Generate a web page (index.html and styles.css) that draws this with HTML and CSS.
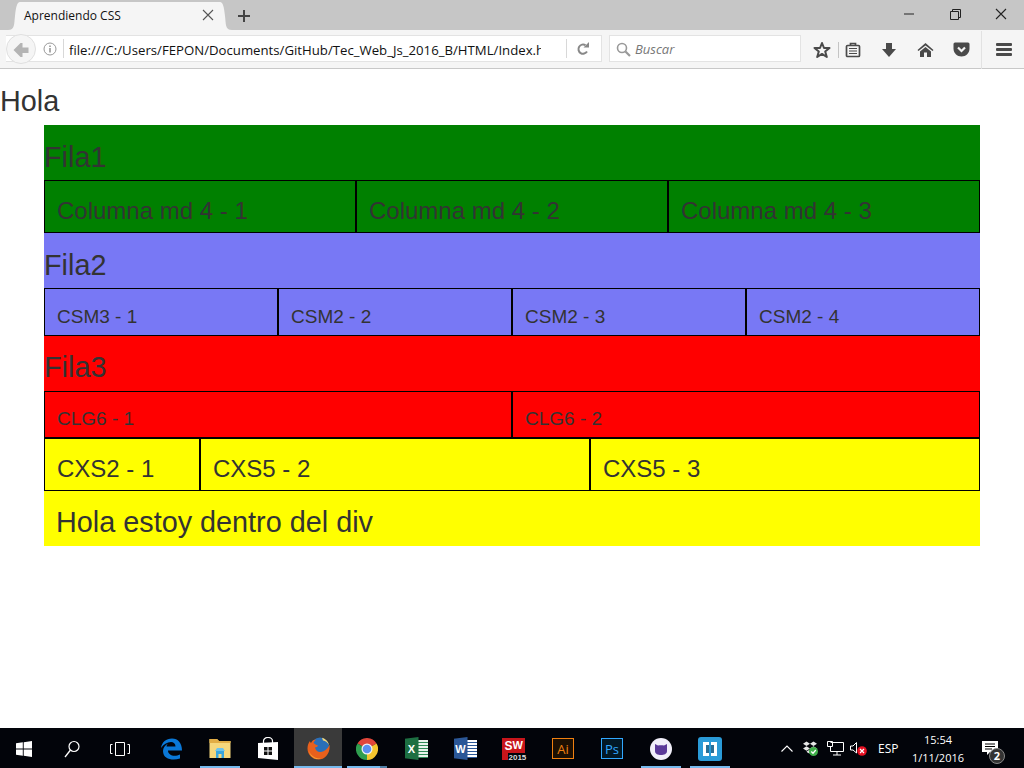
FILE: index.html
```html
<!DOCTYPE html>
<html lang="es">
<head>
  <meta charset="UTF-8">
  <title>Aprendiendo CSS</title>
  <link rel="stylesheet" href="styles.css">
</head>
<body>
  <div class="tabbar">
    <div class="tab">
      <svg class="flare" width="12" height="28" viewBox="0 0 12 28"><path d="M0 28C7 28 6 22 7 14C8 5 9 0 12 0V28Z" fill="#f5f5f5"/></svg>
      <div class="tab-body">
        <span class="tab-title">Aprendiendo CSS</span>
        <svg class="tab-close" width="12" height="12" viewBox="0 0 12 12"><path d="M1 1L11 11M11 1L1 11" stroke="#555" stroke-width="1.1" fill="none"/></svg>
      </div>
      <svg class="flare" width="12" height="28" viewBox="0 0 12 28"><path d="M12 28C5 28 6 22 5 14C4 5 3 0 0 0V28Z" fill="#f5f5f5"/></svg>
    </div>
    <svg class="new-tab" width="14" height="14" viewBox="0 0 14 14"><path d="M7 1V13M1 7H13" stroke="#444" stroke-width="2" fill="none"/></svg>
    <div class="win-buttons">
      <svg width="46" height="30" viewBox="0 0 46 30"><path d="M18 14H28" stroke="#222" fill="none"/></svg>
      <svg width="46" height="30" viewBox="0 0 46 30"><path d="M18.5 11.5H26.5V19.5H18.5ZM20.5 11.5V9.5H28.5V17.5H26.5" stroke="#222" fill="none"/></svg>
      <svg width="46" height="30" viewBox="0 0 46 30"><path d="M18 9L28 19M28 9L18 19" stroke="#222" stroke-width="1.1" fill="none"/></svg>
    </div>
  </div>

  <div class="toolbar">
    <div class="urlbar">
      <div class="back">
        <svg width="16" height="14" viewBox="0 0 16 14"><path d="M7.5 0L0.5 7L7.5 14L9.5 14L9.5 10L15.5 10V4.500L9.500 4.500L9.500 0Z" fill="#b4b4b4"/></svg>
      </div>
      <svg class="info" width="14" height="14" viewBox="0 0 14 14"><circle cx="7" cy="7" r="6" fill="none" stroke="#999"/><path d="M7 6V10.500M7 3.500V5" stroke="#888" stroke-width="1.400" fill="none"/></svg>
      <span class="sep"></span>
      <span class="url">file:///C:/Users/FEPON/Documents/GitHub/Tec_Web_Js_2016_B/HTML/Index.html</span>
      <span class="sep sep-reload"></span>
      <svg class="reload" width="14" height="14" viewBox="0 0 14 14"><path d="M11 9.500A4.600 4.600 0 1 1 9.500 3.200" fill="none" stroke="#888" stroke-width="2"/><path d="M7.500 5.500H13V0Z" fill="#888"/></svg>
    </div>
    <div class="searchbar">
      <svg width="15" height="15" viewBox="0 0 15 15"><circle cx="6" cy="6" r="4.500" fill="none" stroke="#999" stroke-width="1.600"/><path d="M9.500 9.500L14 14" stroke="#999" stroke-width="2.200"/></svg>
      <span class="search-text">Buscar</span>
    </div>
    <div class="tools">
      <svg class="tool-star" width="18" height="18" viewBox="0 0 18 18"><path d="M9 2L11 7H16.500L12.200 10.500L13.800 16L9 12.900L4.200 16L5.800 10.500L1.500 7H7Z" fill="none" stroke="#4a4a4a" stroke-width="2" stroke-linejoin="round"/></svg>
      <span class="tool-sep"></span>
      <svg class="tool-list" width="16" height="16" viewBox="0 0 16 16"><path d="M2.500 3.500H13.500Q14.500 3.500 14.500 4.500V13.500Q14.500 14.500 13.500 14.500H2.500Q1.500 14.500 1.500 13.500V4.500Q1.500 3.500 2.500 3.500ZM5.500 3.500V1.500H10.500V3.500" fill="none" stroke="#4a4a4a" stroke-width="1.700"/><path d="M4 6.500H12M4 9H12M4 11.500H12" stroke="#4a4a4a" stroke-width="1.200"/></svg>
      <svg class="tool-down" width="16" height="16" viewBox="0 0 16 16"><path d="M5 1H11V7H15L8 15L1 7H5Z" fill="#4a4a4a"/></svg>
      <svg class="tool-home" width="17" height="16" viewBox="0 0 17 16"><path d="M8.500 1L0.500 8L1.500 9L8.500 3.500L15.500 9L16.500 8Z" fill="#4a4a4a"/><path d="M8.500 5L3 9.500V15H7V10.500H10V15H14V9.500Z" fill="#4a4a4a"/></svg>
      <svg class="tool-pocket" width="17" height="15" viewBox="0 0 17 15"><path d="M2 0.500H15Q16.500 0.500 16.500 2V6.500C16.500 11 13 14.500 8.500 14.500C4 14.500 0.500 11 0.500 6.500V2Q0.500 0.500 2 0.500Z" fill="#4a4a4a"/><path d="M5 5.500L8.500 9L12 5.500" fill="none" stroke="#f5f5f5" stroke-width="2.200"/></svg>
      <span class="tool-div"></span>
      <div class="menu-btn"><span></span><span></span><span></span></div>
    </div>
  </div>

  <div class="page">
    <p class="hola">Hola</p>
    <div class="container">
      <div class="verde">
        <p class="fila fila-1">Fila1</p>
        <div class="row">
          <div class="col col-4 txt-24">Columna md 4 - 1</div>
          <div class="col col-4 txt-24">Columna md 4 - 2</div>
          <div class="col col-4 txt-24">Columna md 4 - 3</div>
        </div>
      </div>
      <div class="azul">
        <p class="fila">Fila2</p>
        <div class="row">
          <div class="col col-3 txt-19">CSM3 - 1</div>
          <div class="col col-3 txt-19">CSM2 - 2</div>
          <div class="col col-3 txt-19">CSM2 - 3</div>
          <div class="col col-3 txt-19">CSM2 - 4</div>
        </div>
      </div>
      <div class="rojo">
        <p class="fila">Fila3</p>
        <div class="row">
          <div class="col col-6 txt-19">CLG6 - 1</div>
          <div class="col col-6 txt-19">CLG6 - 2</div>
        </div>
      </div>
      <div class="amarillo">
        <div class="row">
          <div class="col col-2 txt-24">CXS2 - 1</div>
          <div class="col col-5 txt-24">CXS5 - 2</div>
          <div class="col col-5 txt-24">CXS5 - 3</div>
        </div>
        <p class="dentro">Hola estoy dentro del div</p>
      </div>
    </div>
  </div>

  <div class="taskbar">
    <div class="task">
      <svg width="16" height="16" viewBox="0 0 16 16"><path d="M0 2.300L6.800 1.300V7.500H0ZM7.700 1.200L16 0V7.500H7.700ZM0 8.400H6.800V14.700L0 13.700ZM7.700 8.400H16V16L7.700 14.800Z" fill="#fff"/></svg>
    </div>
    <div class="task">
      <svg width="16" height="18" viewBox="0 0 16 18"><circle cx="10" cy="6.500" r="5" fill="none" stroke="#fff" stroke-width="1.200"/><path d="M6.500 10L1 17" stroke="#fff" stroke-width="1.300"/></svg>
    </div>
    <div class="task">
      <svg width="20" height="14" viewBox="0 0 20 14"><path d="M5.500 0.500H14.500V13.500H5.500ZM2.500 2.500H0.500V11.500H2.500M17.500 2.500H19.500V11.500H17.500" fill="none" stroke="#fff"/></svg>
    </div>
    <div class="task task-edge">
      <svg width="21" height="22" viewBox="0 0 21 22"><path d="M0 10C1 4 5 0.500 11 0.500C17 0.500 21 5 21 12.500H7C7 17 13 19.500 19 16.500V20.500C12 23 2 21.500 2 13C2 10 4 7 7 5.500C6 6.500 5.500 7.500 5.500 8.500H14.500C14.500 5.500 12.500 4 10 4C6 4 2.500 6.500 0 10Z" fill="#0a78d7"/></svg>
    </div>
    <div class="task task-on task-files">
      <svg width="22" height="21" viewBox="0 0 22 21"><path d="M0.500 1H8L10 3H21.500V20H0.500Z" fill="#f6d77c"/><path d="M0.500 1H8L10 3H21.500V5H0.500Z" fill="#e2ad45"/><path d="M7 12H15V20H12.500V16H9.500V20H7Z" fill="#39a5dd"/><path d="M6 13L8 10H14L16 13Z" fill="#6fc3ea"/></svg>
    </div>
    <div class="task">
      <svg width="22" height="24" viewBox="0 0 22 24"><path d="M6.500 6V4C6.500 2 8.500 0.500 11 0.500C13.500 0.500 15.500 2 15.500 4V6" fill="none" stroke="#fff" stroke-width="1.200"/><path d="M1 6L21 5V23L1 21Z" fill="#fff"/><path d="M7 10H10.500V13.500H7ZM11.500 10H15V13.500H11.500ZM7 14.500H10.500V18H7ZM11.500 14.500H15V18H11.500Z" fill="#111"/></svg>
    </div>
    <div class="task task-on task-now task-ff">
      <svg width="23" height="23" viewBox="0 0 23 23"><circle cx="13" cy="9.500" r="9" fill="#2a6fb8"/><path d="M15 0.800C19 1.800 22 5.500 22.500 10C22 6.500 19 4 16 3.500Z" fill="#f7d774"/><path d="M22.500 8C23.500 16 18 22.500 11.500 22.500C5 22.500 0.500 17.500 0.500 11.500C0.500 8.500 1.500 5.500 3 4C3 5 3.500 5.500 4 6C5 3.500 7 2.500 9 2.500C8 3.500 7 4.500 6.500 6C8 7 9 8 11 8.500C10.500 10 9 10 8 10.500C8.500 13.500 11 15.500 14 15C17.500 14.500 20.500 12 22.500 8Z" fill="#e8601c"/><path d="M2 14C4 19 9 22 14 21.500C9 23.500 3 20 2 14Z" fill="#f7a531"/></svg>
    </div>
    <div class="task task-on task-chrome">
      <svg width="22" height="22" viewBox="0 0 22 22"><path d="M11 11L1.470 5.500A11 11 0 0 1 20.530 5.500Z" fill="#e0453a"/><path d="M11 11L20.530 5.500A11 11 0 0 1 11 22Z" fill="#f5c52e"/><path d="M11 11L11 22A11 11 0 0 1 1.470 5.500Z" fill="#2f9e4f"/><circle cx="11" cy="11" r="5.500" fill="#f2f2f2"/><circle cx="11" cy="11" r="4.300" fill="#5a8ff0"/></svg>
    </div>
    <div class="task task-office">
      <div class="office office-excel"><span class="office-sheet"></span><span class="office-tile">X</span></div>
    </div>
    <div class="task task-office">
      <div class="office office-word"><span class="office-sheet"></span><span class="office-tile">W</span></div>
    </div>
    <div class="task">
      <div class="sw"><span class="sw-s">S</span><span class="sw-w">W</span><span class="sw-year">2015</span></div>
    </div>
    <div class="task task-ai">
      <span class="adobe adobe-ai">Ai</span>
    </div>
    <div class="task task-office">
      <span class="adobe adobe-ps">Ps</span>
    </div>
    <div class="task task-on task-office">
      <svg width="22" height="22" viewBox="0 0 22 22"><circle cx="11" cy="11" r="11" fill="#f1effa"/><path d="M5 6L8 7.500C10 7 12 7 14 7.500L17 6V13C17 16 14 17 11 17C8 17 5 16 5 13Z" fill="#5b3a99"/></svg>
    </div>
    <div class="task task-on task-office">
      <svg width="24" height="24" viewBox="0 0 24 24"><rect width="24" height="24" rx="3" fill="#2a9bd8"/><path d="M5 5H11V19H5ZM13 5H19V19H13Z" fill="#fff"/><path d="M8 8H11V16H8ZM13 8H16V16H13Z" fill="#2a6f96"/></svg>
    </div>

    <div class="tray">
      <svg class="tray-up" width="12" height="7" viewBox="0 0 12 7"><path d="M0.500 6.500L6 1L11.500 6.500" fill="none" stroke="#fff" stroke-width="1.100"/></svg>
      <svg class="tray-box" width="15" height="15" viewBox="0 0 15 15"><path d="M3.500 0.500L7 2.800L3.500 5L0 2.800ZM10.500 0.500L14 2.800L10.500 5L7 2.800ZM3.500 5.200L7 7.500L3.500 9.700L0 7.500ZM10.500 5.200L14 7.500L10.500 9.700L7 7.500ZM3.500 10.500L7 8.500L7 12.500L5 12Z" fill="#e6e6e6"/><circle cx="10.500" cy="10.500" r="4.500" fill="#3fae49"/><path d="M8.300 10.500L10 12.200L12.800 9" fill="none" stroke="#fff" stroke-width="1.300"/></svg>
      <svg class="tray-net" width="17" height="15" viewBox="0 0 17 15"><path d="M3.500 1.500H16.500V10.500H3.500V5.500M10 10.500V14M6 14H14M0.500 0.500H5.500V5.500H0.500Z" fill="none" stroke="#fff"/></svg>
      <svg class="tray-vol" width="17" height="15" viewBox="0 0 17 15"><path d="M0.500 5H3L6.500 1.500V12L3 9H0.500Z" fill="none" stroke="#fff"/><circle cx="12" cy="10" r="4.800" fill="#e81123"/><path d="M10 8L14 12M14 8L10 12" stroke="#fff" stroke-width="1.200"/></svg>
      <span class="tray-lang">ESP</span>
      <div class="clock"><span>15:54</span><span>1/11/2016</span></div>
      <div class="notif">
        <svg width="16" height="15" viewBox="0 0 16 15"><path d="M0 0H16V11H8L5 14V11H0Z" fill="#fff"/><path d="M3 3H13M3 5.500H13M3 8H10" stroke="#000"/></svg>
        <span class="notif-badge">2</span>
      </div>
    </div>
  </div>
</body>
</html>
```

FILE: styles.css
```css
* {
  box-sizing: border-box;
}
body {
  margin: 0;
  height: 768px;
  overflow: hidden;
  display: flex;
  flex-direction: column;
  font-family: "Liberation Sans", Arial, sans-serif;
  color: #333;
  background: #fff;
}
p {
  margin: 0;
}

/* browser chrome */
.tabbar {
  height: 30px;
  display: flex;
  align-items: flex-end;
  background: #c6c6c6;
}
.tab {
  display: flex;
  margin-left: 8px;
  height: 28px;
}
.flare {
  display: block;
}
.tab-body {
  width: 200px;
  display: flex;
  align-items: center;
  justify-content: space-between;
  background: #f5f5f5;
  padding: 0 6px 2px 4px;
}
.tab-title {
  font: 12px "Open Sans", sans-serif;
  color: #111;
}
.new-tab {
  margin: 0 0 7px 5px;
}
.win-buttons {
  margin-left: auto;
  align-self: flex-start;
  display: flex;
}
.toolbar {
  height: 39px;
  display: flex;
  align-items: center;
  background: #f5f5f5;
  border-bottom: 1px solid #c8c8c8;
  padding: 0 0 1px 6px;
}
.urlbar {
  width: 596px;
  height: 27px;
  display: flex;
  align-items: center;
  background: #fff;
  border: 1px solid #e3e3e3;
  border-left: 0;
}
.back {
  width: 30px;
  height: 30px;
  flex: none;
  display: flex;
  align-items: center;
  justify-content: center;
  padding-top: 2px;
  background: #f5f5f5;
  border: 1px solid #e0e0e0;
  border-radius: 50%;
}
.info {
  margin-left: 7px;
  margin-top: 1px;
}
.sep {
  width: 1px;
  height: 19px;
  background: #d8d8d8;
  margin: 0 5px 0 6px;
}
.url {
  width: 472px;
  flex: none;
  overflow: hidden;
  white-space: nowrap;
  padding-top: 2px;
  font: 13.200px "Open Sans", sans-serif;
  color: #111;
}
.sep-reload {
  margin: 0 9px 0 25px;
  flex: none;
}
.reload {
  flex: none;
}
.searchbar {
  width: 192px;
  height: 27px;
  margin-left: 7px;
  display: flex;
  align-items: center;
  gap: 4px;
  padding: 1px 0 0 6px;
  background: #fff;
  border: 1px solid #e3e3e3;
}
.search-text {
  font: italic 13px "Open Sans", sans-serif;
  color: #777;
}
.tools {
  display: flex;
  align-items: center;
  margin-left: 12px;
  padding-top: 2px;
  flex: 1;
}
.tool-sep {
  width: 1px;
  height: 16px;
  background: #c4c4c4;
  margin: 0 6px 0 7px;
}
.tool-down {
  margin-left: 20px;
}
.tool-home {
  margin-left: 20px;
}
.tool-pocket {
  margin-left: 19px;
}
.tool-div {
  width: 1px;
  height: 38px;
  background: #e2e2e2;
  margin: 0 14px 0 11px;
}
.menu-btn {
  width: 16px;
  display: flex;
  flex-direction: column;
  gap: 2px;
}
.menu-btn span {
  height: 3px;
  border-radius: 1px;
  background: #4a4a4a;
}

/* page content */
.page {
  flex: 1;
  padding-top: 12px;
}
.hola {
  font-size: 28.800px;
  line-height: 40px;
}
.container {
  width: 936px;
  margin-left: 44px;
  margin-top: 4px;
}
.verde {
  background: #008000;
}
.azul {
  background: #7878f5;
}
.rojo {
  background: #f00;
}
.amarillo {
  background: #ff0;
}
.fila {
  font-size: 28.800px;
  line-height: 40px;
  padding: 12px 0 3px;
}
.fila-1,
.rojo .fila {
  padding: 11px 0 4px;
}
.fila-1 {
  padding: 12px 0 3px;
}
.row {
  display: flex;
}
.col {
  border: 1px solid #000;
  padding-left: 12px;
  display: flex;
  align-items: center;
}
.col-2 {
  width: 156px;
}
.col-3 {
  width: 234px;
}
.col-4 {
  width: 312px;
}
.col-5 {
  width: 390px;
}
.col-6 {
  width: 468px;
}
.txt-19 {
  font-size: 19px;
  height: 47px;
  padding-top: 9px;
}
.azul .txt-19 {
  height: 48px;
  padding-top: 10px;
}
.rojo .txt-19 {
  padding-top: 8px;
}
.txt-24 {
  font-size: 24px;
  height: 53px;
  padding-top: 8px;
}
.dentro {
  font-size: 28.800px;
  line-height: 40px;
  height: 55px;
  padding: 11px 0 0 12px;
}

/* windows taskbar */
.taskbar {
  height: 40px;
  display: flex;
  background: #02040a;
  color: #fff;
}
.task {
  width: 48px;
  flex: none;
  display: flex;
  align-items: center;
  justify-content: center;
  padding-top: 1px;
}
.task-on {
  background: linear-gradient(#76b9ed, #76b9ed) center bottom / 40px 2px no-repeat;
}
.task-now {
  background: linear-gradient(#76b9ed, #76b9ed) center bottom / 100% 2px no-repeat, #3a3a3a;
}
.task-edge {
  margin-left: 3px;
}
.task-files {
  margin-left: 1px;
}
.task-ff {
  margin-left: 2px;
}
.task-chrome {
  margin-left: 1px;
  background: linear-gradient(90deg, #76b9ed 33px, #4f7fa6 33px) center bottom / 40px 2px no-repeat;
}
.task-office {
  margin-left: 1px;
}
.task-ai {
  margin-left: 2px;
}
.office {
  width: 23px;
  height: 23px;
  display: flex;
  align-items: center;
  position: relative;
}
.office-sheet {
  width: 18px;
  height: 18px;
  margin-left: 5px;
}
.office-excel .office-sheet {
  background: repeating-linear-gradient(#e8f2ec 0 2px, #2f8a58 2px 3px);
}
.office-word .office-sheet {
  background: repeating-linear-gradient(#fff 0 2px, #2b5797 2px 3px);
}
.office-tile {
  position: absolute;
  left: 0;
  top: 0;
  width: 14px;
  height: 23px;
  display: flex;
  align-items: center;
  justify-content: center;
  font-size: 11px;
  font-weight: bold;
  color: #fff;
  clip-path: polygon(0 8%, 100% 0, 100% 100%, 0 92%);
}
.office-excel .office-tile {
  background: #1d6f42;
}
.office-word .office-tile {
  background: #2b5797;
}
.sw {
  width: 23px;
  height: 22px;
  position: relative;
  background: #c8151b;
}
.sw-s {
  position: absolute;
  left: 3px;
  top: 1px;
  font-size: 12px;
  font-weight: bold;
}
.sw-w {
  position: absolute;
  left: 11px;
  top: 1px;
  font-size: 11px;
  font-weight: bold;
}
.sw-year {
  position: absolute;
  left: 6px;
  top: 15px;
  padding: 0 1px;
  font-size: 8px;
  font-weight: bold;
  color: #ddd;
  background: #02040a;
}
.adobe {
  width: 22px;
  height: 21px;
  display: flex;
  align-items: center;
  justify-content: center;
  font-size: 13px;
  font-family: "Open Sans", sans-serif;
  background: #1c0f02;
  border: 1px solid;
}
.adobe-ai {
  color: #f08010;
  border-color: #f08010;
}
.adobe-ps {
  color: #31a8ff;
  background: #021826;
  border-color: #31a8ff;
}
.tray {
  flex: 1;
  display: flex;
  align-items: center;
  padding-left: 47px;
}
.tray-box {
  margin-left: 10px;
}
.tray-net {
  margin-left: 9px;
}
.tray-vol {
  margin-left: 6px;
}
.tray-lang {
  font: 12px "Open Sans", sans-serif;
  margin-left: 11px;
  width: 24px;
}
.clock {
  width: 72px;
  display: flex;
  flex-direction: column;
  align-items: center;
  gap: 3px;
  font: 11px "Open Sans", sans-serif;
}
.notif {
  position: relative;
  margin-left: 8px;
  display: flex;
}
.notif-badge {
  position: absolute;
  left: 7px;
  top: 7px;
  width: 16px;
  height: 16px;
  display: flex;
  align-items: center;
  justify-content: center;
  border-radius: 50%;
  font: bold 11px "Open Sans", sans-serif;
  background: #333;
  border: 1px solid #888;
}
```
